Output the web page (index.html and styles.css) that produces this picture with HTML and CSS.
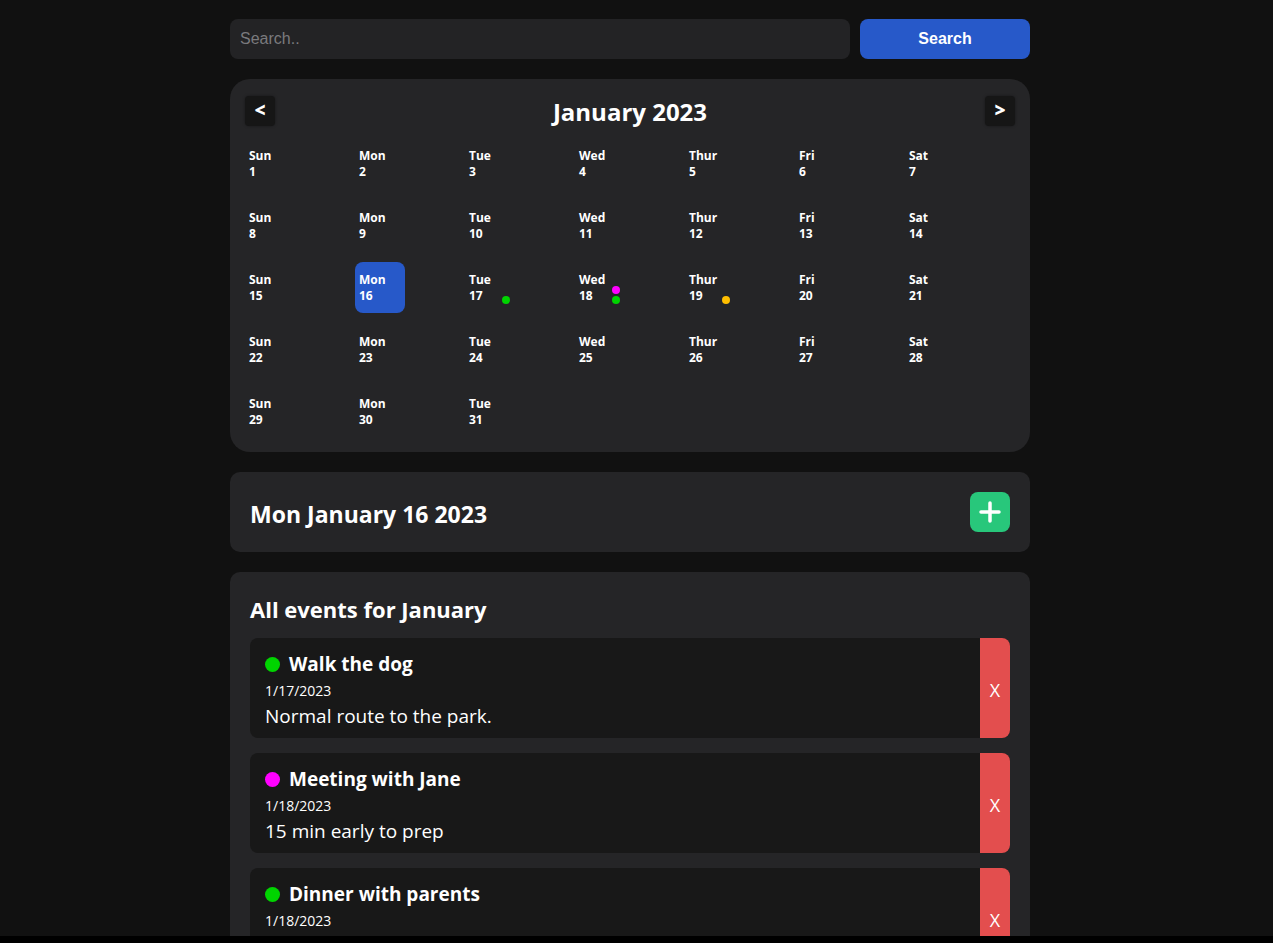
FILE: index.html
```html
<!DOCTYPE html>
<html lang="en">
<head>
  <meta charset="UTF-8">
  <meta name="viewport" content="width=device-width, initial-scale=1.0">
  <title>Calendar</title>
  <link rel="stylesheet" href="styles.css">
</head>
<body>
  <div class="container">
    <div class="search-bar">
      <input class="search-input" type="text" placeholder="Search..">
      <button class="search-btn">Search</button>
    </div>

    <div class="card calendar">
      <div class="cal-header">
        <button class="nav-btn">&lt;</button>
        <h1 class="cal-title">January 2023</h1>
        <button class="nav-btn">&gt;</button>
      </div>
      <div class="cal-grid">
        <div class="day"><div class="day-text">Sun<br>1</div></div>
        <div class="day"><div class="day-text">Mon<br>2</div></div>
        <div class="day"><div class="day-text">Tue<br>3</div></div>
        <div class="day"><div class="day-text">Wed<br>4</div></div>
        <div class="day"><div class="day-text">Thur<br>5</div></div>
        <div class="day"><div class="day-text">Fri<br>6</div></div>
        <div class="day"><div class="day-text">Sat<br>7</div></div>

        <div class="day"><div class="day-text">Sun<br>8</div></div>
        <div class="day"><div class="day-text">Mon<br>9</div></div>
        <div class="day"><div class="day-text">Tue<br>10</div></div>
        <div class="day"><div class="day-text">Wed<br>11</div></div>
        <div class="day"><div class="day-text">Thur<br>12</div></div>
        <div class="day"><div class="day-text">Fri<br>13</div></div>
        <div class="day"><div class="day-text">Sat<br>14</div></div>

        <div class="day"><div class="day-text">Sun<br>15</div></div>
        <div class="day selected"><div class="day-text">Mon<br>16</div></div>
        <div class="day"><div class="day-text">Tue<br>17</div>
          <div class="dots"><span class="dot green"></span></div>
        </div>
        <div class="day"><div class="day-text">Wed<br>18</div>
          <div class="dots"><span class="dot pink"></span><span class="dot green"></span></div>
        </div>
        <div class="day"><div class="day-text">Thur<br>19</div>
          <div class="dots"><span class="dot yellow"></span></div>
        </div>
        <div class="day"><div class="day-text">Fri<br>20</div></div>
        <div class="day"><div class="day-text">Sat<br>21</div></div>

        <div class="day"><div class="day-text">Sun<br>22</div></div>
        <div class="day"><div class="day-text">Mon<br>23</div></div>
        <div class="day"><div class="day-text">Tue<br>24</div></div>
        <div class="day"><div class="day-text">Wed<br>25</div></div>
        <div class="day"><div class="day-text">Thur<br>26</div></div>
        <div class="day"><div class="day-text">Fri<br>27</div></div>
        <div class="day"><div class="day-text">Sat<br>28</div></div>

        <div class="day"><div class="day-text">Sun<br>29</div></div>
        <div class="day"><div class="day-text">Mon<br>30</div></div>
        <div class="day"><div class="day-text">Tue<br>31</div></div>
      </div>
    </div>

    <div class="card selected-day">
      <h2 class="card-title big">Mon January 16 2023</h2>
      <button class="add-btn">
        <svg width="22" height="22" viewBox="0 0 22 22"><path d="M11 2v18M2 11h18" stroke="#fff" stroke-width="3.5" stroke-linecap="round"/></svg>
      </button>
    </div>

    <div class="card events">
      <h2 class="card-title">All events for January</h2>
      <div class="event">
        <div class="event-body">
          <div class="event-title"><span class="event-dot green"></span>Walk the dog</div>
          <div class="event-date">1/17/2023</div>
          <div class="event-desc">Normal route to the park.</div>
        </div>
        <button class="del-btn">X</button>
      </div>
      <div class="event">
        <div class="event-body">
          <div class="event-title"><span class="event-dot pink"></span>Meeting with Jane</div>
          <div class="event-date">1/18/2023</div>
          <div class="event-desc">15 min early to prep</div>
        </div>
        <button class="del-btn">X</button>
      </div>
      <div class="event">
        <div class="event-body">
          <div class="event-title"><span class="event-dot green"></span>Dinner with parents</div>
          <div class="event-date">1/18/2023</div>
          <div class="event-desc">Bring dessert</div>
        </div>
        <button class="del-btn">X</button>
      </div>
    </div>
  </div>
  <div class="bottom-bar"></div>
</body>
</html>
```

FILE: styles.css
```css
*{
  box-sizing: border-box;
}
body{
  margin: 0;
  padding-right: 13px;
  background: #111111;
  color: #fff;
  font-family: "Open Sans", "Noto Sans", sans-serif;
}
.container{
  width: 800px;
  margin: 0 auto;
  padding: 19px 0;
}

.search-bar{
  display: flex;
  gap: 10px;
  height: 40px;
}
.search-input{
  flex: 1;
  border: none;
  outline: none;
  border-radius: 8px;
  background: #232325;
  color: #ddd;
  padding: 0 10px;
  font-family: "Liberation Sans", Arial, sans-serif;
  font-size: 16px;
}
.search-input::placeholder{
  color: #7a7a7d;
}
.search-btn{
  width: 170px;
  border: none;
  border-radius: 8px;
  background: #2759c9;
  color: #fff;
  font-family: "Liberation Sans", Arial, sans-serif;
  font-size: 16px;
  font-weight: 700;
}

.card{
  background: #252527;
  border-radius: 10px;
  margin-top: 20px;
}

.calendar{
  border-radius: 20px;
  padding: 17px 15px 15px;
}
.cal-header{
  display: flex;
  align-items: center;
  justify-content: space-between;
  height: 30px;
}
.nav-btn{
  width: 30px;
  height: 30px;
  border: none;
  border-radius: 4px;
  background: #161616;
  box-shadow: 0 0 3px rgba(0,0,0,.4);
  color: #fff;
  font-family: "Open Sans", sans-serif;
  font-weight: 800;
  font-size: 19px;
  padding: 0 0 3px;
}
.cal-title{
  margin: 0;
  font-size: 24px;
  font-weight: 700;
}
.cal-grid{
  display: grid;
  grid-template-columns: repeat(7, 110px);
  row-gap: 11px;
  margin-top: 12px;
}
.day{
  display: flex;
  justify-content: space-between;
  align-items: flex-end;
  width: 50px;
  height: 51px;
  padding: 10px 5px 9px 4px;
  border-radius: 8px;
  font-size: 12px;
  font-weight: 700;
  line-height: 16px;
}
.day.selected{
  background: #2759c9;
}
.dots{
  display: flex;
  flex-direction: column;
  gap: 2px;
}
.dot{
  display: block;
  width: 8px;
  height: 8px;
  border-radius: 50%;
}
.green{ background: #00d400; }
.pink{ background: #ff00ff; }
.yellow{ background: #ffbf00; }

.selected-day{
  display: flex;
  align-items: center;
  justify-content: space-between;
  padding: 20px;
}
.card-title{
  margin: 0;
  font-size: 22px;
  font-weight: 700;
  line-height: 30px;
}
.card-title.big{
  font-size: 23px;
  padding-top: 3px;
}
.add-btn{
  width: 40px;
  height: 40px;
  border: none;
  border-radius: 8px;
  background: #28c77b;
  display: flex;
  align-items: center;
  justify-content: center;
  padding: 0;
}

.events{
  padding: 22px 20px;
}
.events .card-title{
  margin-bottom: 14px;
}
.event{
  display: flex;
  height: 100px;
  margin-bottom: 15px;
  border-radius: 8px;
  background: #181818;
  overflow: hidden;
}
.event-body{
  flex: 1;
  padding: 13px 15px 10px;
}
.event-title{
  display: flex;
  align-items: center;
  font-size: 19px;
  font-weight: 700;
  line-height: 26px;
}
.event-dot{
  width: 15px;
  height: 15px;
  border-radius: 50%;
  margin-right: 9px;
}
.event-date{
  font-size: 14px;
  line-height: 20px;
  margin-top: 4px;
}
.event-desc{
  font-size: 19px;
  line-height: 26px;
  margin-top: 2px;
}
.del-btn{
  width: 30px;
  border: none;
  background: #e34e4e;
  color: #fff;
  font-family: "Open Sans", sans-serif;
  font-size: 18px;
  padding: 4px 0 0;
}

.bottom-bar{
  position: fixed;
  left: 0;
  right: 0;
  bottom: 0;
  height: 7px;
  background: #000;
}
```
